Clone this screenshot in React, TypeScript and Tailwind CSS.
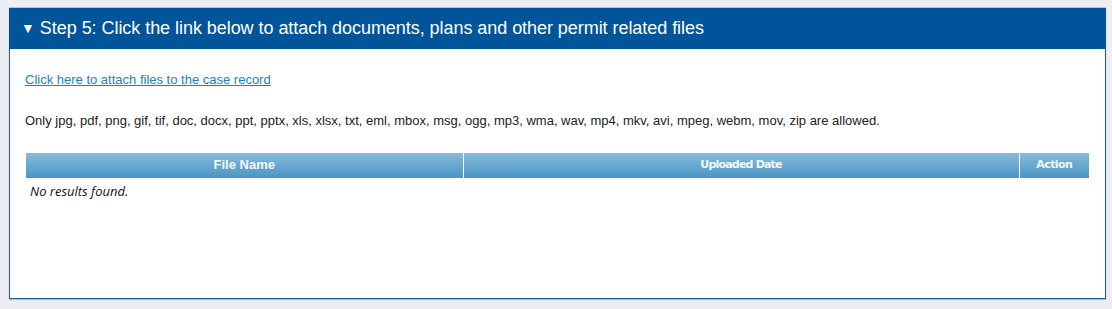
import React from "react";

const allowed =
  "jpg, pdf, png, gif, tif, doc, docx, ppt, pptx, xls, xlsx, txt, eml, mbox, msg, ogg, mp3, wma, wav, mp4, mkv, avi, mpeg, webm, mov, zip";

const App: React.FC = () => {
  return (
    <div className="min-h-[309px] bg-[#eceef3] pl-[9px] pr-[6px] pt-[7px] pb-[9px] font-['Liberation_Sans',Arial,sans-serif]">
      <div className="border-t border-t-[#b9c6d8] shadow-[0_1px_1px_#a9bcd3]">
        {/* Header */}
        <div className="h-[41px] bg-[#00549a] flex items-center pl-[12px] text-white text-[18px]">
          <span className="text-[14px] mr-[5px]">▼</span>
          <span className="tracking-[-0.05px]">Step 5: Click the link below to attach documents, plans and other permit related files</span>
        </div>

        {/* Body */}
        <div className="h-[250px] bg-white border-x border-b border-[#1f5c99] px-[15px] pt-[18px]">
          <a href="#" className="text-[13px] text-[#1a83bd] underline">
            Click here to attach files to the case record
          </a>
          <p className="mt-[20px] text-[13px] leading-[1.5] text-[#222]">Only {allowed} are allowed.</p>

          {/* Files table */}
          <table className="mt-[22px] ml-[1px] w-[1063px] border-collapse">
            <thead>
              <tr className="h-[25px] bg-gradient-to-b from-[#86bbda] to-[#4995c5] text-[#f4f8fc] font-bold">
                <th className="w-[437px] border-r border-white text-[13px]">File Name</th>
                <th className="w-[556px] border-r border-white font-['DejaVu_Sans',sans-serif] text-[11px] tracking-[-0.8px]">Uploaded Date</th>
                <th className="font-['DejaVu_Sans',sans-serif] text-[11px] tracking-[-0.6px]">Action</th>
              </tr>
            </thead>
            <tbody>
              <tr>
                <td colSpan={3} className="pl-[4px] pt-[4px] text-[13px] leading-[18px] italic text-[#111] font-['Open_Sans',sans-serif]">
                  No results found.
                </td>
              </tr>
            </tbody>
          </table>
        </div>
      </div>
    </div>
  );
};

export default App;
